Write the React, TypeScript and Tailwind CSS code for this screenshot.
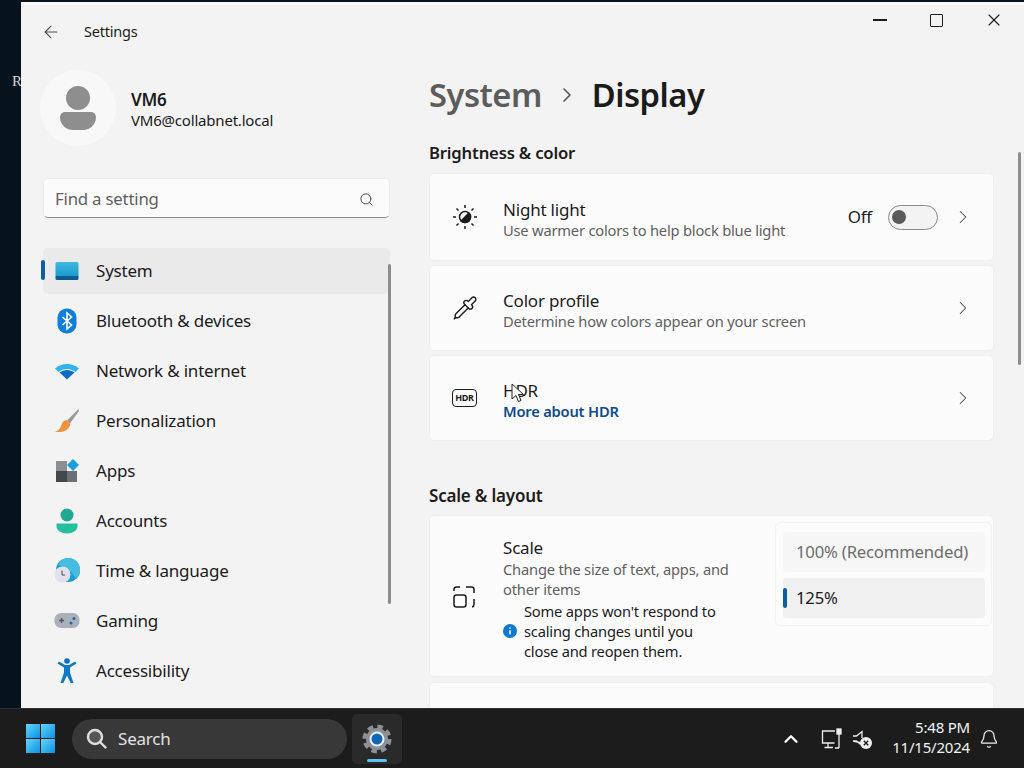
import { ArrowLeft, Bell, ChevronRight, ChevronUp, Pipette, Search, X } from "lucide-react";
import type { ReactNode } from "react";

function SystemIcon() {
  return (
    <svg width="24" height="20" viewBox="0 0 24 20">
      <defs>
        <linearGradient id="sys" x1="0" y1="0" x2="0" y2="1">
          <stop offset="0" stopColor="#3fb8e2" />
          <stop offset="0.75" stopColor="#1f9ccb" />
          <stop offset="0.76" stopColor="#0f5f92" />
          <stop offset="1" stopColor="#0d5a8c" />
        </linearGradient>
      </defs>
      <rect x="0.5" y="1" width="23" height="18" rx="1.5" fill="url(#sys)" />
    </svg>
  );
}

function BluetoothIcon() {
  return (
    <svg width="24" height="26" viewBox="0 0 24 26">
      <rect x="2.5" y="0.5" width="19" height="25" rx="9" fill="#0f7fd8" />
      <path d="M7.5 9l9 8-4.5 4V5l4.5 4-9 8" fill="none" stroke="#fff" strokeWidth="1.6" />
    </svg>
  );
}

function WifiIcon() {
  return (
    <svg width="26" height="18" viewBox="0 0 26 18">
      <path d="M1 6.5C7.5.5 18.5.5 25 6.5l-3.5 3.5c-5-4-12-4-17 0z" fill="#2fb4ec" />
      <path d="M5.5 10.5c4.5-3.5 10.5-3.5 15 0L13 17.5z" fill="#0f6cc4" />
    </svg>
  );
}

function BrushIcon() {
  return (
    <svg width="26" height="26" viewBox="0 0 26 26">
      <path d="M24.5 1L13 12.5l3 3L25 3z" fill="#9a9a9a" />
      <path d="M12.5 12c-3 .5-4.5 2.5-5 5-.5 2.5-3 5.500-6.500 7 5.500.5 11-.5 13.500-4 1.500-2 2-3.500 1.500-4.500z" fill="#f0923a" />
    </svg>
  );
}

function AppsIcon() {
  return (
    <svg width="24" height="24" viewBox="0 0 24 24">
      <rect x="1" y="2" width="11" height="10" fill="#8b8f94" />
      <rect x="1" y="12" width="11" height="11" fill="#43474c" />
      <rect x="12" y="12" width="10" height="11" fill="#6c7075" />
      <path d="M18 0l6 6-6 6-6-6z" fill="#1b9fdc" />
    </svg>
  );
}

function AccountsIcon() {
  return (
    <svg width="22" height="26" viewBox="0 0 22 26">
      <circle cx="11" cy="7" r="6.500" fill="#20a98e" />
      <path d="M0.500 15.500h21v3c0 4-5 7-10.500 7S.5 22.500.5 18.500z" fill="#25bfa0" />
    </svg>
  );
}

function TimeIcon() {
  return (
    <svg width="26" height="26" viewBox="0 0 26 26">
      <circle cx="14" cy="12" r="12" fill="#1b9ed0" />
      <path d="M14 0a12 12 0 0 1 8 21c-3-7-10-12-18-14A12 12 0 0 1 14 0z" fill="#45bde0" />
      <circle cx="8.500" cy="16.500" r="8" fill="#dfe2ea" />
      <path d="M8 12.500v4.500h3" fill="none" stroke="#4a4a55" strokeWidth="1" />
    </svg>
  );
}

function GamingIcon() {
  return (
    <svg width="26" height="18" viewBox="0 0 26 18">
      <rect x="0.500" y="1" width="25" height="15" rx="6.500" fill="#a9b0ba" />
      <path d="M5 8.500h5M7.500 6v5" stroke="#4d5562" strokeWidth="1.300" />
      <circle cx="17" cy="11" r="1.500" fill="#2a60a8" />
      <circle cx="20" cy="6.500" r="1.500" fill="#2a60a8" />
    </svg>
  );
}

function AccessibilityIcon() {
  return (
    <svg width="22" height="26" viewBox="0 0 22 26">
      <circle cx="11" cy="3" r="2.800" fill="#0f6fbe" />
      <path d="M1.500 5.500L8 9.500v5L4.500 25h2.800L11 17.500 14.700 25h2.800L14 14.500v-5l6.500-4-1.300-2L13 7H9L2.800 3.500z" fill="#0f78c8" />
    </svg>
  );
}

const navItems: { label: string; icon: ReactNode }[] = [
  { label: "System", icon: <SystemIcon /> },
  { label: "Bluetooth & devices", icon: <BluetoothIcon /> },
  { label: "Network & internet", icon: <WifiIcon /> },
  { label: "Personalization", icon: <BrushIcon /> },
  { label: "Apps", icon: <AppsIcon /> },
  { label: "Accounts", icon: <AccountsIcon /> },
  { label: "Time & language", icon: <TimeIcon /> },
  { label: "Gaming", icon: <GamingIcon /> },
  { label: "Accessibility", icon: <AccessibilityIcon /> },
];

function Sidebar() {
  return (
    <aside className="relative flex w-[408px] shrink-0 flex-col overflow-hidden">
      <div className="flex h-[58px] items-center pl-[20px] pt-[2px]">
        <ArrowLeft className="h-[20px] w-[20px] text-[#4d4d4d]" strokeWidth={1.300} />
        <span className="ml-[23px] text-[14.500px] text-[#1b1b1b]">Settings</span>
      </div>
      <div className="mt-[10px] flex items-center pl-[19px]">
        <div className="flex h-[76px] w-[76px] flex-col items-center justify-center gap-[2px] rounded-full bg-[#f8f8f8]">
          <div className="h-[24px] w-[24px] rounded-full bg-[#8e8e8e]" />
          <div className="h-[18px] w-[36px] rounded-b-[18px] rounded-t-[7px] bg-[#8e8e8e]" />
        </div>
        <div className="ml-[15px] flex flex-col pt-[2px]">
          <span className="text-[17px] font-semibold leading-[22px] text-[#1a1a1a]">VM6</span>
          <span className="text-[15px] leading-[19px] text-[#1a1a1a]">VM6@collabnet.local</span>
        </div>
      </div>
      <div className="ml-[22px] mt-[32px] flex h-[40px] w-[347px] items-center justify-between rounded-[5px] border border-[#ececec] border-b-[#8a8a8a] bg-[#fbfbfb] pl-[11px] pr-[15px] pt-[2px]">
        <span className="text-[16.800px] text-[#5f5f5f]">Find a setting</span>
        <Search className="h-[15px] w-[15px] text-[#444]" strokeWidth={1.500} />
      </div>
      <nav className="ml-[22px] mt-[30px] flex w-[347px] flex-col gap-[4px]">
        {navItems.map((item, i) => (
          <div
            key={item.label}
            className={`relative flex h-[46px] shrink-0 items-center rounded-[5px] ${i === 0 ? "bg-[#eaeaea]" : ""}`}
          >
            {i === 0 && <div className="absolute left-[-2px] top-[12px] h-[20px] w-[4px] rounded-full bg-[#0f5c9e]" />}
            <div className="flex w-[53px] justify-center pr-[5px]">{item.icon}</div>
            <span className="text-[17px] text-[#1b1b1b]">{item.label}</span>
          </div>
        ))}
      </nav>
      <div className="absolute left-[367px] top-[262px] h-[340px] w-[2.500px] rounded-full bg-[#8d8d8d]" />
    </aside>
  );
}

function Card({ icon, title, children, right, h }: { icon: ReactNode; title: string; children: ReactNode; right?: ReactNode; h: string }) {
  return (
    <div className={`flex items-center rounded-[5px] border border-[#efefef] bg-[#fbfbfb] pl-[22px] pr-[19px] ${h}`}>
      <div className="flex w-[51px] shrink-0">{icon}</div>
      <div className="flex flex-col pt-[4px]">
        <span className="text-[17px] leading-[21px] text-[#1b1b1b]">{title}</span>
        {children}
      </div>
      <div className="ml-auto flex items-center">
        {right}
        <ChevronRight className="ml-[14px] h-[22px] w-[22px] text-[#444]" strokeWidth={1.100} />
      </div>
    </div>
  );
}

function NightIcon() {
  return (
    <svg width="26" height="26" viewBox="0 0 26 26" fill="none" stroke="#1b1b1b" strokeWidth="1.500">
      <circle cx="13" cy="13" r="5.500" />
      <path d="M13 7.500a5.500 5.500 0 0 1 0 11z" fill="#1b1b1b" transform="rotate(45 13 13)" />
      <path d="M13 1v3M13 22v3M1 13h3M22 13h3M4.500 4.500l2 2M19.500 19.500l2 2M4.500 21.500l2-2M19.500 6.500l2-2" />
    </svg>
  );
}

function HdrIcon() {
  return (
    <div className="flex h-[18px] w-[25px] items-center justify-center rounded-[4px] border-[1.500px] border-[#1b1b1b] text-[9px] font-bold tracking-[-0.3px] text-[#1b1b1b]">
      HDR
    </div>
  );
}

function ScaleIcon() {
  return (
    <svg width="24" height="24" viewBox="0 0 24 24" fill="none" stroke="#1b1b1b" strokeWidth="1.500">
      <rect x="2" y="10" width="12" height="12" rx="2.500" />
      <path d="M2 6V4.500A2.500 2.500 0 0 1 4.500 2H8M14 2h5.500A2.500 2.500 0 0 1 22 4.500V8M22 14v5.500a2.500 2.500 0 0 1-2 2.400" />
    </svg>
  );
}

function Cursor() {
  return (
    <svg className="absolute left-[8px] top-[-18px]" width="13" height="20" viewBox="0 0 13 20">
      <path d="M1 1v15l4-3.500 2.500 6 2.500-1-2.500-6h5z" fill="#fff" stroke="#222" strokeWidth="1" />
    </svg>
  );
}

function Main() {
  return (
    <main className="flex min-w-0 flex-1 overflow-hidden">
      <div className="flex w-[565px] shrink-0 flex-col">
        <div className="mt-[70px] flex items-center">
          <span className="text-[32.700px] font-semibold leading-[46px] tracking-[-0.5px] text-[#5c5c5c]">System</span>
          <ChevronRight className="mx-[13px] h-[24px] w-[24px] text-[#555]" strokeWidth={1.600} />
          <span className="text-[32.700px] font-semibold leading-[46px] tracking-[-0.5px] text-[#1b1b1b]">Display</span>
        </div>
        <h2 className="mt-[23px] text-[16.700px] font-semibold leading-[24px] text-[#1b1b1b]">Brightness &amp; color</h2>
        <div className="mt-[8px] flex flex-col gap-[4px]">
          <Card
            h="h-[88px]"
            icon={<NightIcon />}
            title="Night light"
            right={
              <>
                <span className="text-[17px] text-[#1b1b1b]">Off</span>
                <div className="ml-[16px] flex h-[25px] w-[50px] items-center rounded-full border border-[#8a8a8a] bg-[#f3f3f3] pl-[3px]">
                  <div className="h-[14px] w-[14px] rounded-full bg-[#5a5a5a]" />
                </div>
              </>
            }
          >
            <span className="text-[14.700px] leading-[20px] text-[#5f5f5f]">Use warmer colors to help block blue light</span>
          </Card>
          <Card h="h-[86px]" icon={<Pipette className="h-[26px] w-[26px] text-[#1b1b1b]" strokeWidth={1.300} />} title="Color profile">
            <span className="text-[14.700px] leading-[20px] text-[#5f5f5f]">Determine how colors appear on your screen</span>
          </Card>
          <Card h="h-[86px]" icon={<HdrIcon />} title="HDR">
            <span className="relative text-[14.700px] font-semibold leading-[20px] text-[#0f4a8a]">
              More about HDR
              <Cursor />
            </span>
          </Card>
        </div>
        <h2 className="mt-[43px] text-[17px] font-semibold leading-[24px] text-[#1b1b1b]">Scale &amp; layout</h2>
        <div className="mt-[7px] flex h-[162px] shrink-0 items-center rounded-[5px] border border-[#efefef] bg-[#fbfbfb] pl-[22px]">
          <div className="flex w-[51px] shrink-0 pt-[2px]">
            <ScaleIcon />
          </div>
          <div className="flex w-[236px] flex-col pt-[6px]">
            <span className="text-[17px] leading-[20px] text-[#1b1b1b]">Scale</span>
            <span className="mt-[1px] text-[14.700px] leading-[20px] text-[#5f5f5f]">Change the size of text, apps, and other items</span>
            <div className="mt-[2px] flex items-center">
              <svg className="shrink-0" width="14" height="14" viewBox="0 0 14 14">
                <circle cx="7" cy="7" r="7" fill="#0f78d0" />
                <path d="M7 6.200v4M7 3.500v1.300" stroke="#fff" strokeWidth="1.500" />
              </svg>
              <span className="ml-[7px] w-[205px] text-[14.700px] leading-[20px] text-[#1b1b1b]">
                Some apps won't respond to scaling changes until you close and reopen them.
              </span>
            </div>
          </div>
          <div className="mb-[44px] ml-[36px] flex h-[104px] w-[217px] flex-col gap-[6px] rounded-[5px] border border-[#f2f2f2] py-[9px] pl-[7px] pr-[6px]">
            <div className="flex h-[40px] shrink-0 items-center rounded-[4px] bg-[#f6f6f6] pl-[13px] text-[16.700px] text-[#6d6d6d]">100% (Recommended)</div>
            <div className="relative flex h-[40px] shrink-0 items-center rounded-[4px] bg-[#f0f0f0] pl-[13px] text-[16.700px] text-[#1b1b1b]">
              <div className="absolute left-0 top-[10px] h-[20px] w-[4px] rounded-full bg-[#0f5c9e]" />
              125%
            </div>
          </div>
        </div>
        <div className="mt-[5px] h-[40px] shrink-0 rounded-[5px] border border-[#efefef] bg-[#fbfbfb]" />
      </div>
      <div className="ml-[24px] mt-[150px] h-[213px] w-[3px] shrink-0 rounded-full bg-[#8d8d8d]" />
    </main>
  );
}

function WindowControls() {
  return (
    <div className="absolute right-[2px] top-0 flex h-[36px] items-center text-[#1b1b1b]">
      <div className="flex w-[57px] justify-center">
        <div className="h-[1.500px] w-[14px] bg-[#1b1b1b]" />
      </div>
      <div className="flex w-[57px] justify-center">
        <div className="h-[13px] w-[13px] rounded-[1px] border-[1.500px] border-[#1b1b1b]" />
      </div>
      <div className="flex w-[57px] justify-center">
        <X className="h-[20px] w-[20px]" strokeWidth={1.300} />
      </div>
    </div>
  );
}

function Taskbar() {
  return (
    <footer className="flex h-[60px] shrink-0 items-center border-t border-[#2c2c2c] bg-[#1c1c1c] text-white">
      <svg className="ml-[26px]" width="29" height="29" viewBox="0 0 29 29">
        <defs>
          <linearGradient id="win" x1="0" y1="0" x2="1" y2="1">
            <stop offset="0" stopColor="#62d6f9" />
            <stop offset="1" stopColor="#0b8fe6" />
          </linearGradient>
        </defs>
        <rect x="0" y="0" width="14" height="14" fill="url(#win)" />
        <rect x="15" y="0" width="14" height="14" fill="url(#win)" />
        <rect x="0" y="15" width="14" height="14" fill="url(#win)" />
        <rect x="15" y="15" width="14" height="14" fill="url(#win)" />
      </svg>
      <div className="ml-[17px] flex h-[40px] w-[275px] items-center rounded-full bg-[#383838] pl-[14px]">
        <svg width="21" height="21" viewBox="0 0 21 21" fill="#565656" stroke="#dedede" strokeWidth="2.400">
          <circle cx="9" cy="9" r="7" />
          <path d="M14 14l5.500 5.500" strokeLinecap="round" />
        </svg>
        <span className="ml-[11px] text-[17px] text-[#e2e2e2]">Search</span>
      </div>
      <div className="relative ml-[5px] flex h-[50px] w-[50px] items-center justify-center rounded-[5px] bg-[#2a2a2a]">
        <svg width="32" height="32" viewBox="0 0 32 32">
          <circle cx="16" cy="16" r="11" fill="#8d9196" />
          <circle cx="16" cy="16" r="12.500" fill="none" stroke="#8d9196" strokeWidth="4" strokeDasharray="5.500 4.320" />
          <circle cx="16" cy="16" r="7.500" fill="#eef2f7" />
          <circle cx="16" cy="16" r="5.500" fill="#0f67b8" />
        </svg>
        <div className="absolute bottom-[2px] left-[15px] h-[3px] w-[20px] rounded-full bg-[#5cc4f2]" />
      </div>
      <div className="ml-auto flex items-center">
        <ChevronUp className="h-[22px] w-[22px] text-white" strokeWidth={2.500} />
        <svg className="ml-[19px]" width="22" height="22" viewBox="0 0 22 22" fill="none" stroke="#eee" strokeWidth="1.300">
          <path d="M14 3H1.500v12h12M7 15v4M3.500 19.500H12" />
          <rect x="16" y="1" width="4" height="5" fill="#eee" />
          <path d="M18 6v14M14 20h4" />
        </svg>
        <svg className="ml-[8px]" width="22" height="22" viewBox="0 0 22 22" fill="none" stroke="#eee" strokeWidth="1.300">
          <path d="M2 8h3.500L11 3.500V10M11 15l-2 1-3.500-3H2z" />
          <circle cx="15" cy="15" r="6" fill="#eee" stroke="none" />
          <path d="M12.800 12.800l4.400 4.400M17.200 12.800l-4.400 4.400" stroke="#1c1c1c" strokeWidth="1.400" />
        </svg>
        <div className="mb-[4px] ml-[10px] flex w-[87px] flex-col items-end text-[15px] leading-[20px] text-[#f2f2f2]">
          <span>5:48 PM</span>
          <span>11/15/2024</span>
        </div>
        <Bell className="ml-[9px] mr-[25px] h-[20px] w-[20px] text-[#eee]" strokeWidth={1.500} />
      </div>
    </footer>
  );
}

export default function App() {
  return (
    <div className="flex h-[768px] w-[1024px] flex-col overflow-hidden bg-[#06131d] font-['Noto_Sans','Open_Sans',sans-serif] tracking-[-0.2px]">
      <div className="flex min-h-0 flex-1">
        <div className="w-[21px] shrink-0 overflow-hidden pl-[12px] pt-[70px] font-['Liberation_Serif',serif] text-[15px] text-[#d8d8d8]">R</div>
        <div className="relative mt-[2px] flex min-w-0 flex-1 bg-[#f3f3f3] shadow-[inset_0_3px_0_#fafafa]">
          <Sidebar />
          <Main />
          <WindowControls />
        </div>
      </div>
      <Taskbar />
    </div>
  );
}
